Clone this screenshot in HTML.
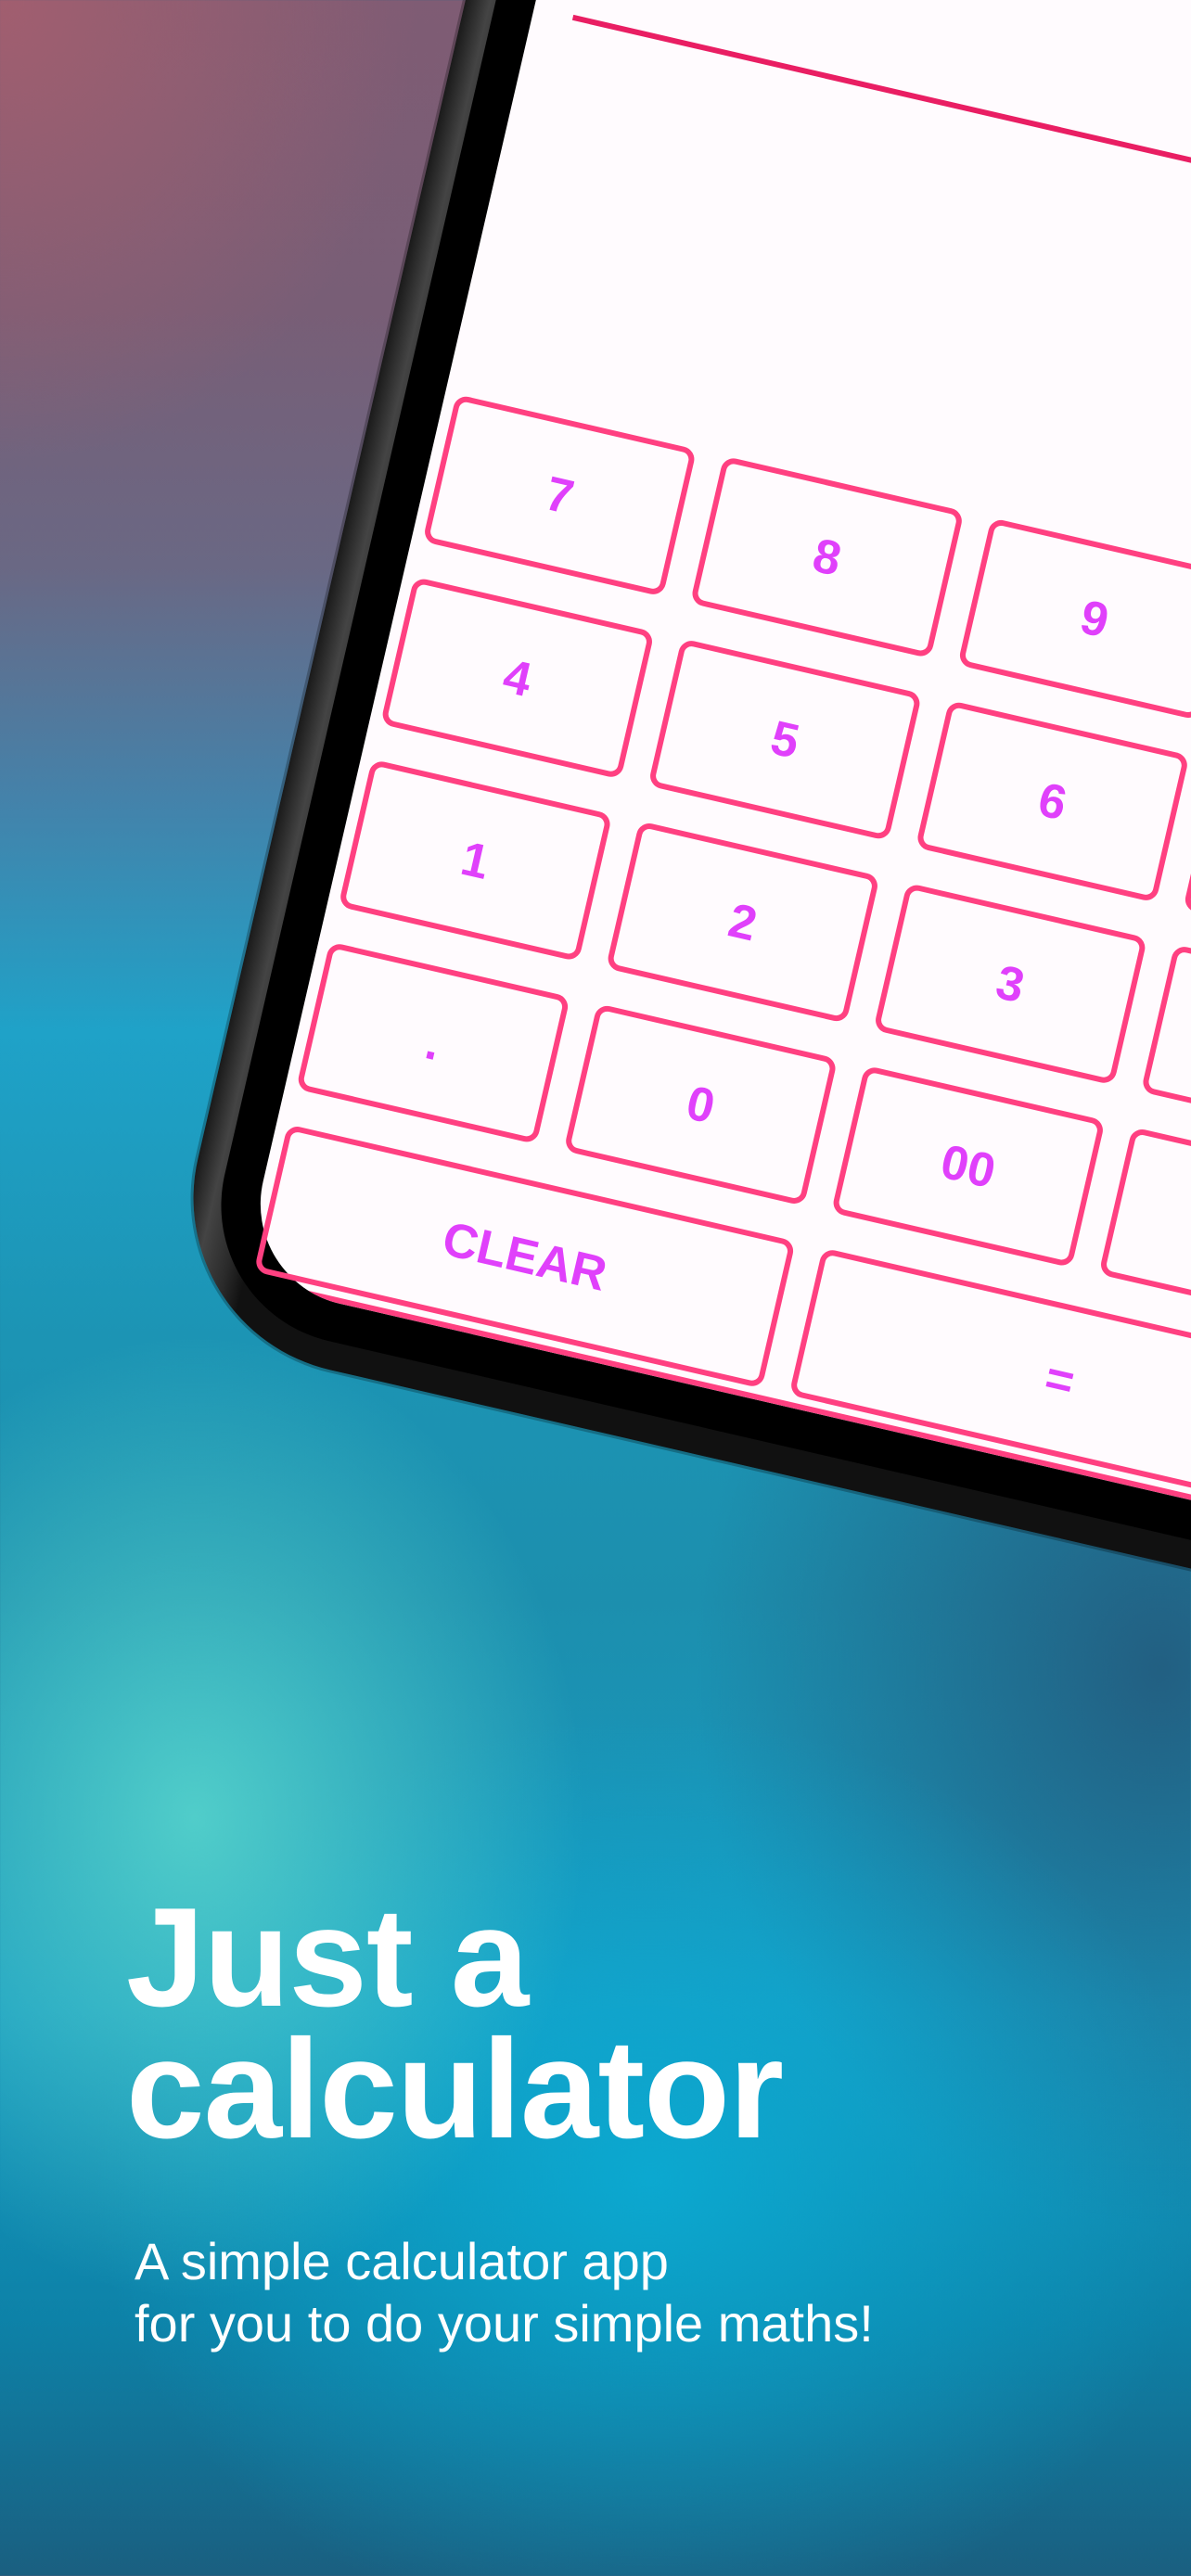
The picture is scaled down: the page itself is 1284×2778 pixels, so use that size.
<!DOCTYPE html>
<html><head><meta charset="utf-8">
<style>
html,body{margin:0;padding:0;}
body{width:1284px;height:2778px;overflow:hidden;position:relative;
background:
radial-gradient(ellipse 420px 520px at 210px 1960px, rgba(90,215,205,0.85), rgba(90,215,205,0) 100%),
radial-gradient(ellipse 600px 500px at 700px 2350px, rgba(10,175,215,0.8), rgba(10,175,215,0) 100%),
radial-gradient(ellipse 500px 600px at 1250px 1800px, rgba(35,90,125,0.9), rgba(35,90,125,0) 100%),
radial-gradient(ellipse 450px 500px at 0px 0px, rgba(170,95,110,0.8), rgba(170,95,110,0) 100%),
linear-gradient(180deg,#7f5c74 0%,#785e76 12%,#6a6884 22%,#4482aa 31%,#1fa2c8 40%,#1c94b4 52%,#1c8fae 62%,#1799c0 78%,#0d82a8 90%,#1a5f80 100%);
font-family:"Liberation Sans",sans-serif;}
.frame{position:absolute;left:492px;top:425px;width:0;height:0;transform-origin:0 0;transform:rotate(13deg);}
.rim{position:absolute;left:-86px;top:-900px;width:2600px;height:1956px;border-radius:0 0 0 190px;
background:linear-gradient(90deg,#1a1a1a 0%,#444 1%,#2a2a2a 2.2%,#111 3%);
box-shadow:0 0 0 3px rgba(0,0,0,0.25);}
.bezel{position:absolute;left:-54px;top:-900px;width:2600px;height:1926px;border-radius:0 0 0 150px;background:#000;}
.screen{position:absolute;left:-12px;top:-900px;width:2600px;height:1884px;border-radius:0 0 0 110px;background:#fffbfe;overflow:hidden;}
.line{position:absolute;left:43px;top:473px;width:2000px;height:6px;background:#e91e63;}
.bline{position:absolute;left:0;top:1878px;width:2600px;height:6px;background:#ff4081;}
.k{position:absolute;width:254px;height:151px;border:6px solid #ff4081;border-radius:14px;color:#e040fb;font-weight:bold;font-size:52px;display:flex;align-items:center;justify-content:center;}
.w{width:550px;}
.sub{position:absolute;left:145px;color:#fff;font-size:56px;line-height:67px;top:2405px;}
h1{position:absolute;left:136px;top:2040px;margin:0;color:#fff;font-size:152px;line-height:142px;font-weight:bold;letter-spacing:-1px;}
</style></head><body>
<div class="frame">
  <div class="rim"></div>
  <div class="bezel"></div>
  <div class="screen">
    <div class="line"></div>
    <div class="bline"></div>
  </div>
  <div class="k" style="left:0;top:0">7</div>
  <div class="k" style="left:296px;top:0">8</div>
  <div class="k" style="left:592px;top:0">9</div>
  <div class="k" style="left:888px;top:0">÷</div>
  <div class="k" style="left:0;top:202px">4</div>
  <div class="k" style="left:296px;top:202px">5</div>
  <div class="k" style="left:592px;top:202px">6</div>
  <div class="k" style="left:888px;top:202px">×</div>
  <div class="k" style="left:0;top:404px">1</div>
  <div class="k" style="left:296px;top:404px">2</div>
  <div class="k" style="left:592px;top:404px">3</div>
  <div class="k" style="left:888px;top:404px">−</div>
  <div class="k" style="left:0;top:606px">.</div>
  <div class="k" style="left:296px;top:606px">0</div>
  <div class="k" style="left:592px;top:606px">00</div>
  <div class="k" style="left:888px;top:606px">+</div>
  <div class="k w" style="left:0;top:808px">CLEAR</div>
  <div class="k w" style="left:592px;top:808px">=</div>
</div>
<h1>Just a<br>calculator</h1>
<div class="sub">A simple calculator app<br>for you to do your simple maths!</div>
</body></html>
